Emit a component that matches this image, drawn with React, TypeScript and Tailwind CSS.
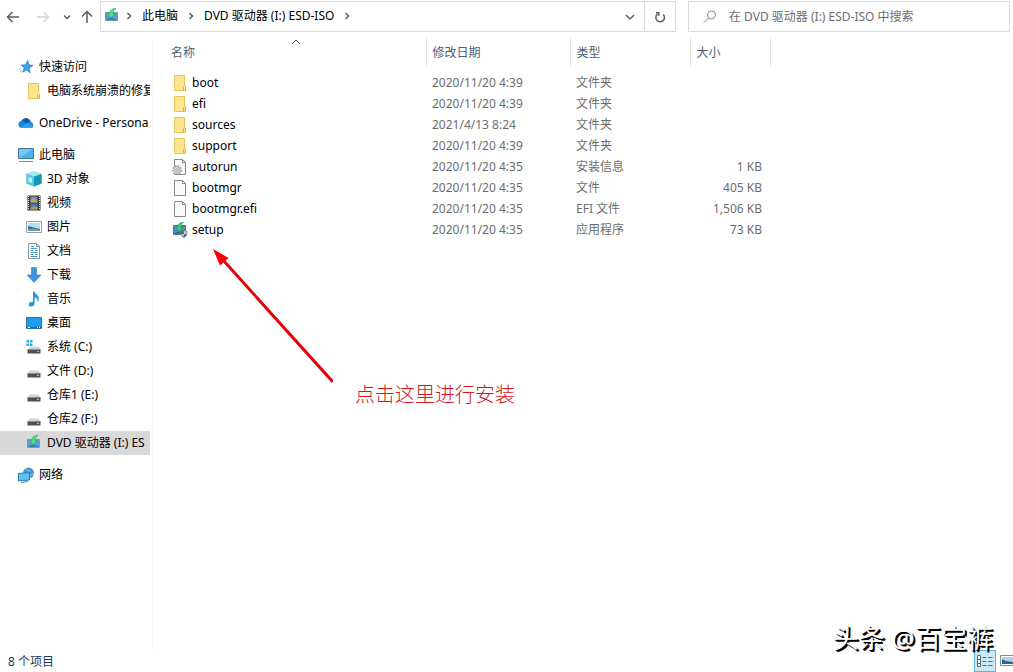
import type { ReactNode } from 'react';

const FolderIcon = () => (
  <svg viewBox="0 0 16 16" className="size-4 shrink-0">
    <path d="M2.500 .5h10v10.500h1v4.500h-11z" fill="#fde48f" stroke="#e6c65c" />
    <path d="M11.500 11.500v4M13.500 11v4.500" stroke="#d9b545" fill="none" />
  </svg>
);

const FileIcon = () => (
  <svg viewBox="0 0 16 16" className="size-4 shrink-0">
    <path d="M2.500 .5h8l3 3v12h-11z" fill="#fafafa" stroke="#8a8a8a" />
    <path d="M10.500 .5v3h3" fill="none" stroke="#8a8a8a" />
  </svg>
);

const InfIcon = () => (
  <svg viewBox="0 0 16 16" className="size-4 shrink-0">
    <path d="M2.500 .5h8l3 3v12h-11z" fill="#fafafa" stroke="#8a8a8a" />
    <path d="M10.500 .5v3h3" fill="none" stroke="#8a8a8a" />
    <circle cx="5" cy="11" r="4" fill="#e4e4e4" stroke="#a5a5a5" strokeWidth="2" strokeDasharray="1.6 1.1" />
    <circle cx="5" cy="11" r="3.2" fill="#dedede" stroke="#b0b0b0" strokeWidth=".8" />
    <circle cx="5" cy="11" r="1.3" fill="#fff" stroke="#8f8f8f" strokeWidth=".8" />
  </svg>
);

const DiscIcon = () => (
  <svg viewBox="0 0 16 16" className="size-4 shrink-0">
    <path d="M1.500 4.500h12v8h-12z" fill="#5b9fd2" stroke="#6f9cbd" />
    <path d="M2 12l5-3 6 3z" fill="#3f7db6" />
    <path d="M3.500 5.500l3.500 4.500 4.500-4.500-2.500.2c0-2.200 1-3.700 3-5.200-4 0-6.200 1.500-6.200 5z" fill="#4fe084" stroke="#25a653" strokeWidth=".6" />
  </svg>
);

const SetupIcon = () => (
  <svg viewBox="0 0 16 16" className="size-4 shrink-0">
    <path d="M1.500 3.500h12v9h-12z" fill="#4b8fc8" stroke="#4f7391" />
    <path d="M2 12l4.500-3 7 3z" fill="#2f679f" />
    <path d="M3.500 5.200l3.500 4.300 4-4.700-2.300.2c0-2 .8-3.500 2.800-4.700-4 0-5.800 2-5.800 5z" fill="#35d46c" stroke="#1c9a48" strokeWidth=".6" />
    <path d="M8.500 9.200l3.300-1.200 3.200 1.200c.2 3.300-.8 5.300-3.200 6.500-2.400-1.200-3.500-3.200-3.300-6.500z" fill="#2f6aa8" stroke="#888" strokeWidth=".8" />
    <path d="M11.800 8.800l2.600.9v2.300h-2.600zM9.200 12h2.600v3c-1.600-.8-2.400-1.800-2.600-3z" fill="#ead488" />
  </svg>
);

const StarIcon = () => (
  <svg viewBox="0 0 16 16" className="size-4 shrink-0">
    <path d="M9.800 1.500l1 4.200 4.200.8-3.700 2.400.8 5-3.300-3-4.300 2.400 1.700-4.600-3.200-2.600 4.300-.3z" fill="#3aa3e3" stroke="#2583c2" strokeWidth=".7" />
    <path d="M1 10.500l2.500-1M1.500 13l2.500-1.500" stroke="#7cc4ee" />
  </svg>
);

const CloudIcon = () => (
  <svg viewBox="0 0 16 16" className="size-4 shrink-0">
    <path d="M3.600 13a3.600 3.600 0 0 1-.3-7.100 5 5 0 0 1 9.200.8 3.200 3.200 0 0 1 .2 6.300z" fill="#1683dc" />
    <path d="M3.300 5.900a5 5 0 0 1 9.200.8c-1.800-.2-3 .6-3.800 1.600-1.500-1.500-3.300-2.400-5.400-2.400z" fill="#0c5bae" />
    <path d="M2 12.500l8-4.500 5.500 3.500c-.6 1-1.500 1.500-2.800 1.500h-9.100c-.6 0-1.100-.2-1.600-.5z" fill="#2ba2f2" />
  </svg>
);

const PcIcon = () => (
  <svg viewBox="0 0 16 16" className="size-4 shrink-0">
    <path d="M.5 1.500h15v10h-15z" fill="#4db1ef" stroke="#4c7590" />
    <path d="M1 2h14L1 11z" fill="#74c8f7" />
    <path d="M1 14.500h14" stroke="#7d8b94" />
  </svg>
);

const CubeIcon = () => (
  <svg viewBox="0 0 16 16" className="size-4 shrink-0">
    <path d="M8 .5l7.500 2.500v9.500l-7.500 3-7.500-3v-9.500z" fill="#2bb5d3" />
    <path d="M8 .5l7.500 2.500-7.500 2.700-7.500-2.700z" fill="#a5e6f1" />
    <path d="M.5 3l7.500 2.700v9.800l-7.500-3z" fill="#5bcbdf" />
    <path d="M2.500 6l3.500 1.300v4.700l-3.500-1.500z" fill="#c9f3f7" />
    <path d="M8 5.700l7.500-2.700v9.500l-7.500 3z" fill="#1596b8" />
  </svg>
);

const VideoIcon = () => (
  <svg viewBox="0 0 16 16" className="size-4 shrink-0">
    <path d="M1.500 .5h13v15h-13z" fill="#3b3b3b" />
    <path d="M2.500 1v14M13.500 1v14" stroke="#e8e8e8" strokeDasharray="1 1" />
    <path d="M4.500 1.500h7v6h-7z" fill="#6c8fb8" />
    <path d="M4.500 5l3-2 4 3.500v1h-7z" fill="#c6a451" />
    <path d="M4.500 8.500h7v6h-7z" fill="#3d76c6" />
    <path d="M4.500 13l3-2 4 1v2.500h-7z" fill="#b59a4a" />
  </svg>
);

const PictureIcon = () => (
  <svg viewBox="0 0 16 16" className="size-4 shrink-0">
    <path d="M.5 2.500h15v11h-15z" fill="#fff" stroke="#8fa0ac" />
    <path d="M2 4h12v8h-12z" fill="#b9ddf3" />
    <path d="M2 7l4 1 8 2v2h-12z" fill="#44708f" />
    <path d="M2 10.500l6-1 6 1.500v1h-12z" fill="#74a1ad" />
  </svg>
);

const DocIcon = () => (
  <svg viewBox="0 0 16 16" className="size-4 shrink-0">
    <path d="M2.500 .5h8l3 3v12h-11z" fill="#fff" stroke="#8a949c" />
    <path d="M10.500 .5v3h3" fill="none" stroke="#8a949c" />
    <path d="M5 3.500h3M5 5.500h6M4.500 7.500h3M9 7.500h2.500M4.500 9.500h7M4.500 11.500h3M9 11.500h2.500M4.500 13.500h7" stroke="#4a97c9" />
  </svg>
);

const DownloadIcon = () => (
  <svg viewBox="0 0 16 16" className="size-4 shrink-0">
    <path d="M5.500 .5h5v7.500h4.500l-7 7.500-7-7.500h4.500z" fill="#3c95dc" stroke="#2c7fc2" strokeWidth=".6" />
  </svg>
);

const MusicIcon = () => (
  <svg viewBox="0 0 16 16" className="size-4 shrink-0">
    <path d="M7 .5h1.600c.4 2.500 4.400 3.500 4.200 7.500 0 1.400-.6 2.600-1.300 3.500.5-2.500-.2-4.300-2.900-5.200v6.200c0 1.800-1.500 3-3.300 3-1.500 0-2.500-.8-2.500-2.100 0-1.800 2-3 4.200-2.600z" fill="#1e9be0" />
  </svg>
);

const DesktopIcon = () => (
  <svg viewBox="0 0 16 16" className="size-4 shrink-0">
    <path d="M.5 2.500h15v11h-15z" fill="#1c9cf0" stroke="#3b6e93" />
    <path d="M1 12.500h14" stroke="#0f6ab0" />
    <path d="M2 12.500h2M11 12.500h1M13 12.500h1" stroke="#fff" />
  </svg>
);

const DriveIcon = () => (
  <svg viewBox="0 0 16 16" className="size-4 shrink-0">
    <path d="M3.500 7.500h9l2 3h-13z" fill="#cfd1d2" />
    <path d="M1.500 10.500h13v4h-13z" fill="#4e5154" />
    <path d="M1.500 10.500h13" stroke="#8b8e90" />
    <path d="M11 12.500h2" stroke="#7be07f" />
  </svg>
);

const SystemDriveIcon = () => (
  <svg viewBox="0 0 16 16" className="size-4 shrink-0">
    <path d="M.5 1h2.500v2.500h-2.500zM4 1h2.500v2.500h-2.500zM.5 4.500h2.500v2.500h-2.500zM4 4.500h2.500v2.500h-2.500z" fill="#22b1e0" />
    <path d="M4.500 7.500h8l2 3h-13z" fill="#cfd1d2" />
    <path d="M1.500 10.500h13v4h-13z" fill="#4e5154" />
    <path d="M1.500 10.500h13" stroke="#8b8e90" />
    <path d="M11 12.500h2" stroke="#7be07f" />
  </svg>
);

const NetworkIcon = () => (
  <svg viewBox="0 0 16 16" className="size-4 shrink-0">
    <circle cx="10.500" cy="6" r="5.500" fill="#4796cf" />
    <path d="M8 2.500c2 .5 2.500 2 4 1.500M12 11c-1-2 1-4 3.500-4" stroke="#a6d4ef" fill="none" />
    <path d="M.5 6.500l11-1v7.500l-11 1z" fill="#5cc1f5" stroke="#2f7bab" />
    <path d="M3 15.500l7-1" stroke="#4c88ad" />
  </svg>
);

const Chevron = ({ d, className = '' }: { d: string; className?: string }) => (
  <svg viewBox="0 0 10 10" className={`size-[10px] shrink-0 ${className}`} fill="none" stroke="currentColor">
    <path d={d} />
  </svg>
);

const RIGHT = 'M3.500 2l3 3-3 3';
const DOWN = 'M1 3l4 4 4-4';

const ArrowLeft = () => (
  <svg viewBox="0 0 14 14" className="size-[14px]" fill="none" stroke="currentColor" strokeWidth="1.500">
    <path d="M13 7h-11.500M6.500 2l-5 5 5 5" />
  </svg>
);

type NavItem = { icon: () => ReactNode; label: string; child?: boolean; selected?: boolean };

const groups: NavItem[][] = [
  [
    { icon: StarIcon, label: '快速访问' },
    { icon: FolderIcon, label: '电脑系统崩溃的修复', child: true },
  ],
  [{ icon: CloudIcon, label: 'OneDrive - Persona' }],
  [
    { icon: PcIcon, label: '此电脑' },
    { icon: CubeIcon, label: '3D 对象', child: true },
    { icon: VideoIcon, label: '视频', child: true },
    { icon: PictureIcon, label: '图片', child: true },
    { icon: DocIcon, label: '文档', child: true },
    { icon: DownloadIcon, label: '下载', child: true },
    { icon: MusicIcon, label: '音乐', child: true },
    { icon: DesktopIcon, label: '桌面', child: true },
    { icon: SystemDriveIcon, label: '系统 (C:)', child: true },
    { icon: DriveIcon, label: '文件 (D:)', child: true },
    { icon: DriveIcon, label: '仓库1 (E:)', child: true },
    { icon: DriveIcon, label: '仓库2 (F:)', child: true },
    { icon: DiscIcon, label: 'DVD 驱动器 (I:) ES', child: true, selected: true },
  ],
  [{ icon: NetworkIcon, label: '网络' }],
];

const files = [
  { icon: FolderIcon, name: 'boot', date: '2020/11/20 4:39', type: '文件夹', size: '' },
  { icon: FolderIcon, name: 'efi', date: '2020/11/20 4:39', type: '文件夹', size: '' },
  { icon: FolderIcon, name: 'sources', date: '2021/4/13 8:24', type: '文件夹', size: '' },
  { icon: FolderIcon, name: 'support', date: '2020/11/20 4:39', type: '文件夹', size: '' },
  { icon: InfIcon, name: 'autorun', date: '2020/11/20 4:35', type: '安装信息', size: '1 KB' },
  { icon: FileIcon, name: 'bootmgr', date: '2020/11/20 4:35', type: '文件', size: '405 KB' },
  { icon: FileIcon, name: 'bootmgr.efi', date: '2020/11/20 4:35', type: 'EFI 文件', size: '1,506 KB' },
  { icon: SetupIcon, name: 'setup', date: '2020/11/20 4:35', type: '应用程序', size: '73 KB' },
];

function Toolbar() {
  return (
    <header className="flex h-8 pt-px pr-[3px]">
      <div className="flex items-center text-[#5c5c5c]">
        <button aria-label="后退" className="flex w-[26px] justify-center">
          <ArrowLeft />
        </button>
        <button aria-label="前进" className="flex w-[34px] rotate-180 justify-center text-[#d4d4d4]">
          <ArrowLeft />
        </button>
        <button aria-label="最近位置" className="flex w-[14px] justify-center">
          <Chevron d="M2 3.500l3 3 3-3" className="stroke-[1.5]" />
        </button>
        <button aria-label="上移" className="flex w-[26px] rotate-90 justify-center">
          <ArrowLeft />
        </button>
      </div>

      <div className="flex min-w-0 flex-1 border border-[#d9d9d9]">
        <div className="flex min-w-0 flex-1 items-center whitespace-nowrap pb-px pl-[3px] text-[#606060]">
          <DiscIcon />
          <Chevron d={RIGHT} className="ml-1 stroke-[1.5]" />
          <button className="ml-2 text-black">此电脑</button>
          <Chevron d={RIGHT} className="mx-2 stroke-[1.5]" />
          <button className="text-black">DVD 驱动器 (I:) ESD-ISO</button>
          <Chevron d={RIGHT} className="ml-2 stroke-[1.5]" />
        </div>
        <button aria-label="以前的位置" className="flex w-7 items-center justify-center text-[#606060]">
          <Chevron d={DOWN} className="stroke-[1.5]" />
        </button>
        <button aria-label="刷新" className="flex w-[31px] items-center justify-center border-l border-[#d9d9d9] text-[#606060]">
          <svg viewBox="0 0 12 12" className="size-3" fill="none" stroke="currentColor" strokeWidth="1.500">
            <path d="M9.300 3.500a4.300 4.300 0 1 1-5.800-.4M2 1.800h2.800v3" />
          </svg>
        </button>
      </div>

      <label className="ml-3 flex w-[322px] items-center gap-3 border border-[#d9d9d9] pl-[14px]">
        <svg viewBox="0 0 14 14" className="size-[14px] shrink-0" fill="none" stroke="#8a8a8a">
          <circle cx="8.500" cy="5" r="4" />
          <path d="M5.700 7.800l-5 5" />
        </svg>
        <input
          aria-label="搜索"
          placeholder="在 DVD 驱动器 (I:) ESD-ISO 中搜索"
          className="min-w-0 flex-1 outline-none placeholder:text-[#6d6d6d]"
        />
      </label>
    </header>
  );
}

function Sidebar() {
  return (
    <nav className="mt-[7px] flex w-[153px] shrink-0 flex-col gap-2 border-r border-[#f5f5f5] pt-4 pr-[2px]">
      {groups.map((group, index) => (
        <div key={index}>
          {group.map((item) => (
            <button
              key={item.label}
              className={`flex h-6 w-full items-center gap-[5px] overflow-hidden whitespace-nowrap ${
                item.child ? 'pl-[26px]' : 'pl-[18px]'
              } ${item.selected ? 'bg-[#d9d9d9]' : ''}`}
            >
              <item.icon />
              {item.label}
            </button>
          ))}
        </div>
      ))}
    </nav>
  );
}

function FileTable() {
  return (
    <table className="mt-[6px] w-[617px] table-fixed text-left text-[#6d6d6d]">
      <thead>
        <tr className="h-7 text-[#4c607a]">
          <th className="relative w-[273px] border-r border-[#e5e5e5] pt-[2px] pl-[18px] font-normal">
            <Chevron d="M1 7l4-4 4 4" className="absolute -top-px left-[138px] text-[#606060]" />
            <button>名称</button>
          </th>
          <th className="w-36 border-r border-[#e5e5e5] pt-[2px] pl-[6px] font-normal"><button>修改日期</button></th>
          <th className="w-[120px] border-r border-[#e5e5e5] pt-[2px] pl-[6px] font-normal"><button>类型</button></th>
          <th className="w-20 border-r border-[#e5e5e5] pt-[2px] pl-[6px] font-normal"><button>大小</button></th>
        </tr>
      </thead>
      <tbody className="before:block before:h-[6px]">
        {files.map((file) => (
          <tr key={file.name} className="h-[21px]">
            <td className="pl-[19px]">
              <div className="flex items-center gap-1 text-black">
                <file.icon />
                {file.name}
              </div>
            </td>
            <td className="pl-[6px]">{file.date}</td>
            <td className="pl-[6px]">{file.type}</td>
            <td className="pr-2 text-right">{file.size}</td>
          </tr>
        ))}
      </tbody>
    </table>
  );
}

export default function App() {
  return (
    <div className="relative flex min-h-screen flex-col bg-white font-['Noto_Sans','Noto_Sans_CJK_SC',sans-serif] text-xs leading-4 text-black">
      <Toolbar />
      <div className="flex flex-1">
        <Sidebar />
        <main className="relative min-w-0 flex-1">
          <FileTable />
          <svg viewBox="0 0 120 134" className="absolute top-[217px] left-[60px] h-[134px] w-[120px]">
            <path d="M10 11L119 132" stroke="#e60008" strokeWidth="3" strokeLinecap="round" />
            <path d="M0 0l15.500 9-8.500 7.500z" fill="#f80000" />
          </svg>
          <p className="absolute top-[351px] left-[202px] text-xl leading-6 font-light whitespace-nowrap text-[#d8141c]">
            点击这里进行安装
          </p>
        </main>
      </div>

      <footer className="flex h-[22px] items-center justify-between pl-2 text-[#1e395b]">
        <span className="pt-[2px]">8 个项目</span>
        <div className="flex h-full items-center">
          <button aria-label="详细信息" className="flex h-full w-[22px] items-center justify-center border border-[#5fb6dd] bg-[#cce8f7]">
            <svg viewBox="0 0 16 14" className="h-[14px] w-4" fill="none" stroke="#5c6b78">
              <path d="M.5 1.500h3v11h-3zM.5 5.500h3M.5 9.500h3" fill="#fff" />
              <path d="M5.500 3.500h4M11 3.500h4.500M5.500 7.500h4M11 7.500h4.500M5.500 11.500h4M11 11.500h4.500" />
            </svg>
          </button>
          <button aria-label="大图标" className="flex h-full w-[17px] items-center justify-end overflow-hidden">
            <svg viewBox="0 0 13 12" className="h-3 w-[13px]">
              <path d="M.5 .5h14v10h-14z" fill="#fff" stroke="#7d8a94" />
              <path d="M2 2h11v7h-11z" fill="#a9d3ee" />
              <path d="M2 4l4 2 7 1v2h-11z" fill="#2f6585" />
            </svg>
          </button>
        </div>
      </footer>

      <div className="pointer-events-none absolute right-5 bottom-[18px] text-[26px] leading-8 whitespace-nowrap text-white [text-shadow:1px_1px_0_#000,2px_2px_0_#000]">
        头条 @百宝裤
      </div>
    </div>
  );
}
